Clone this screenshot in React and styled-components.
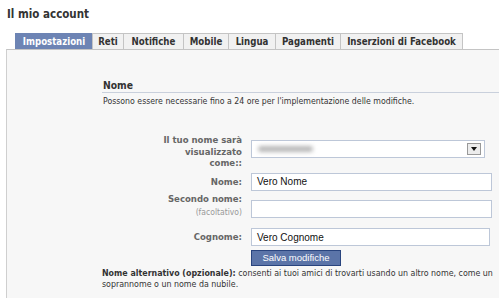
import React from "react";
import styled, { createGlobalStyle } from "styled-components";

const Global = createGlobalStyle`
  html, body { margin: 0; padding: 0; background: #fff; overflow: hidden; }
  body { width: 499px; height: 298px; font-family: "DejaVu Sans Condensed", "DejaVu Sans", sans-serif; }
`;

const Page = styled.div`
  padding: 7px 0 0 6px;
  width: 560px;
`;

const Title = styled.h1`
  margin: 0 0 12px 1px;
  font-size: 11.5px;
  line-height: 14px;
  font-weight: bold;
  color: #333;
`;

const TabBar = styled.div`
  display: flex;
  padding-left: 9px;
  height: 16px;
`;

const Tab = styled.div`
  box-sizing: border-box;
  width: ${(p) => p.$w}px;
  height: 16px;
  border: 1px solid ${(p) => (p.$active ? "#6d84b4" : "#c4c4c4")};
  border-bottom: none;
  margin-left: -1px;
  background: ${(p) => (p.$active ? "#6d84b4" : "#f1f1f1")};
  color: ${(p) => (p.$active ? "#fff" : "#333")};
  font-size: 9.6px;
  font-weight: bold;
  line-height: 15px;
  text-align: center;
  white-space: nowrap;
  &:first-child { margin-left: 0; }
`;

const Panel = styled.div`
  border-top: 1px solid #c4c4c4;
  border-left: 1px solid #cfcfcf;
  background: #f7f7f7;
  height: 260px;
  padding: 29px 0 0 95px;
  box-sizing: border-box;
`;

const Section = styled.section`
  width: 440px;
`;

const SectionTitle = styled.h2`
  margin: 0;
  font-size: 10.3px;
  font-weight: bold;
  color: #333;
  line-height: 13px;
  padding: 0 0 0 1px;
  border-bottom: 1px solid #c9d0dc;
`;

const Note = styled.p`
  margin: 3px 0 0 1px;
  font-size: 8.7px;
  line-height: 11px;
  color: #333;
`;

const Form = styled.div`
  display: grid;
  grid-template-columns: 140px 241px;
  column-gap: 9px;
  align-items: center;
  margin-top: 27px;
`;

const Label = styled.div`
  text-align: right;
  font-size: 9.5px;
  line-height: 11.5px;
  font-weight: bold;
  color: #666;
  margin-top: ${(p) => p.$mt || 0}px;
`;

const Hint = styled.div`
  font-weight: normal;
  font-size: 8.5px;
  color: #999;
  line-height: 16px;
`;

const Field = styled.div`
  height: 18px;
  box-sizing: border-box;
  border: 1px solid #bdc7d8;
  background: #fff;
  width: ${(p) => p.$w || 241}px;
  margin-top: ${(p) => p.$mt || 0}px;
  align-self: ${(p) => p.$align || "center"};
  display: flex;
  align-items: center;
  padding: 0 5px;
  font-family: "Liberation Sans", Arial, sans-serif;
  font-size: 10px;
  color: #111;
`;

const Blur = styled.span`
  display: block;
  width: 55px;
  height: 6px;
  background: #b8b8b8;
  border-radius: 3px;
  filter: blur(2px);
  margin-left: 1px;
`;

const DropButton = styled.span`
  margin-left: auto;
  width: 12px;
  height: 10px;
  border: 1px solid #999;
  background: #ececec;
  display: flex;
  align-items: center;
  justify-content: center;
  margin-right: -2px;
`;

const Spacer = styled.div``;

const SaveButton = styled.button`
  justify-self: start;
  margin-top: 4px;
  width: 90px;
  height: 16px;
  padding: 0;
  background: #5b74a8;
  border: 1px solid #29447e;
  color: #fff;
  font-family: "Liberation Sans", Arial, sans-serif;
  font-size: 9.5px;
  line-height: 14px;
`;

const Alt = styled.p`
  margin: 2px 0 0 0;
  width: 400px;
  font-size: 8.8px;
  line-height: 10.5px;
  color: #333;
  b { color: #333; }
`;

const tabs = [
  ["Impostazioni", 78],
  ["Reti", 32],
  ["Notifiche", 61],
  ["Mobile", 46],
  ["Lingua", 48],
  ["Pagamenti", 66],
  ["Inserzioni di Facebook", 123],
];

export default function App() {
  return (
    <>
      <Global />
      <Page>
        <Title>Il mio account</Title>
        <TabBar>
          {tabs.map(([t, w], i) => (
            <Tab key={t} $active={i === 0} $w={w}>
              {t}
            </Tab>
          ))}
        </TabBar>
        <Panel>
          <Section>
            <SectionTitle>Nome</SectionTitle>
            <Note>Possono essere necessarie fino a 24 ore per l'implementazione delle modifiche.</Note>
            <Form>
              <Label>
                Il tuo nome sarà
                <br />
                visualizzato
                <br />
                come::
              </Label>
              <Field $w={234} $align="start" $mt={6}>
                <Blur />
                <DropButton>
                  <svg width="6" height="4" viewBox="0 0 6 4">
                    <path d="M0 0h6L3 4z" fill="#111" />
                  </svg>
                </DropButton>
              </Field>
              <Label $mt={4}>Nome:</Label>
              <Field $mt={4}>Vero Nome</Field>
              <Label $mt={2}>
                Secondo nome:
                <Hint>(facoltativo)</Hint>
              </Label>
              <Field $mt={9.5} $align="start" />
              <Label $mt={8}>Cognome:</Label>
              <Field $mt={8} $w={239}>Vero Cognome</Field>
              <Spacer />
              <SaveButton>Salva modifiche</SaveButton>
            </Form>
            <Alt>
              <b>Nome alternativo (opzionale):</b> consenti ai tuoi amici di trovarti usando un altro nome, come un soprannome o un nome da nubile.
            </Alt>
          </Section>
        </Panel>
      </Page>
    </>
  );
}
